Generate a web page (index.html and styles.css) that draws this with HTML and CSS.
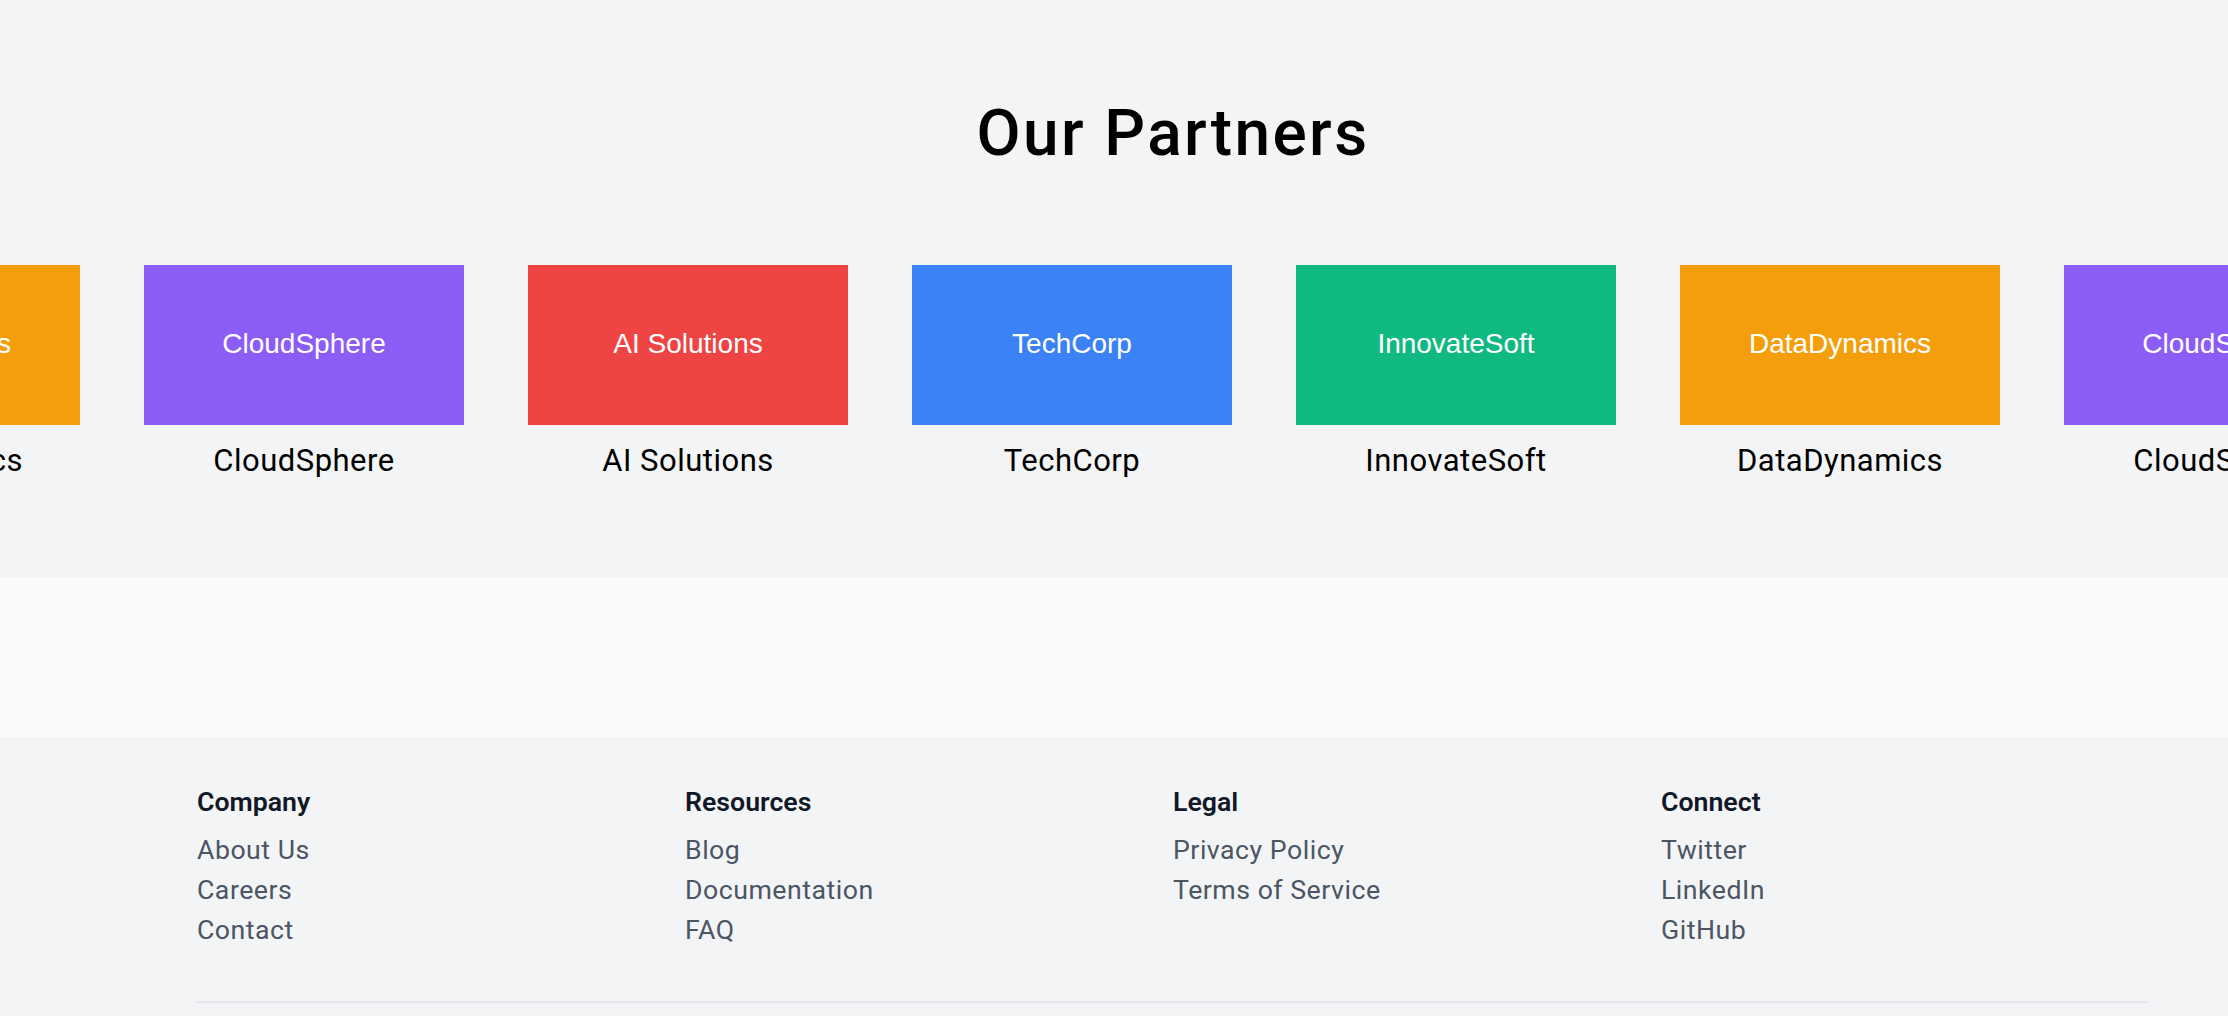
FILE: index.html
```html
<!DOCTYPE html>
<html lang="en">
<head>
<meta charset="utf-8">
<title>Our Partners</title>
<link rel="stylesheet" href="styles.css">
</head>
<body>
<div class="page">
  <section class="partners">
    <h2 class="partners-title">Our Partners</h2>
    <div class="track-viewport">
      <div class="track">
        <div class="partner"><div class="logo orange">DataDynamics</div><div class="name">DataDynamics</div></div>
        <div class="partner"><div class="logo purple">CloudSphere</div><div class="name">CloudSphere</div></div>
        <div class="partner"><div class="logo red">AI Solutions</div><div class="name">AI Solutions</div></div>
        <div class="partner"><div class="logo blue">TechCorp</div><div class="name">TechCorp</div></div>
        <div class="partner"><div class="logo green">InnovateSoft</div><div class="name">InnovateSoft</div></div>
        <div class="partner"><div class="logo orange">DataDynamics</div><div class="name">DataDynamics</div></div>
        <div class="partner"><div class="logo purple">CloudSphere</div><div class="name">CloudSphere</div></div>
        <div class="partner"><div class="logo red">AI Solutions</div><div class="name">AI Solutions</div></div>
      </div>
    </div>
  </section>
  <section class="band"></section>
  <footer class="footer">
    <div class="footer-inner">
      <div class="footer-cols">
        <div class="col">
          <h3 class="col-title">Company</h3>
          <ul class="links">
            <li><a href="#">About Us</a></li>
            <li><a href="#">Careers</a></li>
            <li><a href="#">Contact</a></li>
          </ul>
        </div>
        <div class="col">
          <h3 class="col-title">Resources</h3>
          <ul class="links">
            <li><a href="#">Blog</a></li>
            <li><a href="#">Documentation</a></li>
            <li><a href="#">FAQ</a></li>
          </ul>
        </div>
        <div class="col">
          <h3 class="col-title">Legal</h3>
          <ul class="links">
            <li><a href="#">Privacy Policy</a></li>
            <li><a href="#">Terms of Service</a></li>
          </ul>
        </div>
        <div class="col">
          <h3 class="col-title">Connect</h3>
          <ul class="links">
            <li><a href="#">Twitter</a></li>
            <li><a href="#">LinkedIn</a></li>
            <li><a href="#">GitHub</a></li>
          </ul>
        </div>
      </div>
      <div class="footer-rule"></div>
    </div>
  </footer>
</div>
</body>
</html>
```
FILE: styles.css
```css
html, body {
  margin: 0;
  padding: 0;
  overflow: hidden;
  background: #f3f4f6;
}
body {
  font-family: Roboto, "Liberation Sans", sans-serif;
  color: #000;
}
.page {
  width: 2346px;
}
.partners {
  background: #f3f4f6;
  padding: 102px 0 98px;
}
.partners-title {
  margin: 0;
  text-align: center;
  font-size: 64px;
  line-height: 64px;
  font-weight: 500;
  letter-spacing: 2.4px;
  color: #000;
}
.track-viewport {
  margin-top: 99px;
  overflow: hidden;
}
.track {
  display: flex;
  gap: 64px;
  margin-left: -240px;
}
.partner {
  flex: 0 0 320px;
  display: flex;
  flex-direction: column;
  align-items: center;
}
.logo {
  width: 320px;
  height: 160px;
  display: flex;
  align-items: center;
  justify-content: center;
  box-sizing: border-box;
  padding-bottom: 3px;
  font-family: "Liberation Sans", Arial, sans-serif;
  font-size: 28px;
  color: #fff;
}
.purple { background: #8b5cf6; }
.red { background: #ef4444; }
.blue { background: #3b82f6; }
.green { background: #10b981; }
.orange { background: #f59e0b; }
.name {
  margin-top: 18px;
  font-size: 31px;
  line-height: 36px;
  letter-spacing: 0.5px;
  color: #000;
  white-space: nowrap;
}
.band {
  height: 160px;
  background: #f9fafb;
}
.footer {
  background: #f3f4f6;
  padding-top: 49px;
  height: 400px;
}
.footer-inner {
  width: 1952px;
  margin: 0 auto;
}
.footer-cols {
  display: grid;
  grid-template-columns: repeat(4, 1fr);
}
.col-title {
  margin: 0;
  font-size: 26.7px;
  line-height: 32px;
  font-weight: 600;
  color: #111827;
}
.links {
  list-style: none;
  margin: 12px 0 0;
  padding: 0;
}
.links li {
  font-size: 26.7px;
  line-height: 40px;
  letter-spacing: 0.5px;
}
.links a {
  color: #4b5563;
  text-decoration: none;
}
.footer-rule {
  margin-top: 51px;
  height: 2px;
  background: #e5e7eb;
}
```
